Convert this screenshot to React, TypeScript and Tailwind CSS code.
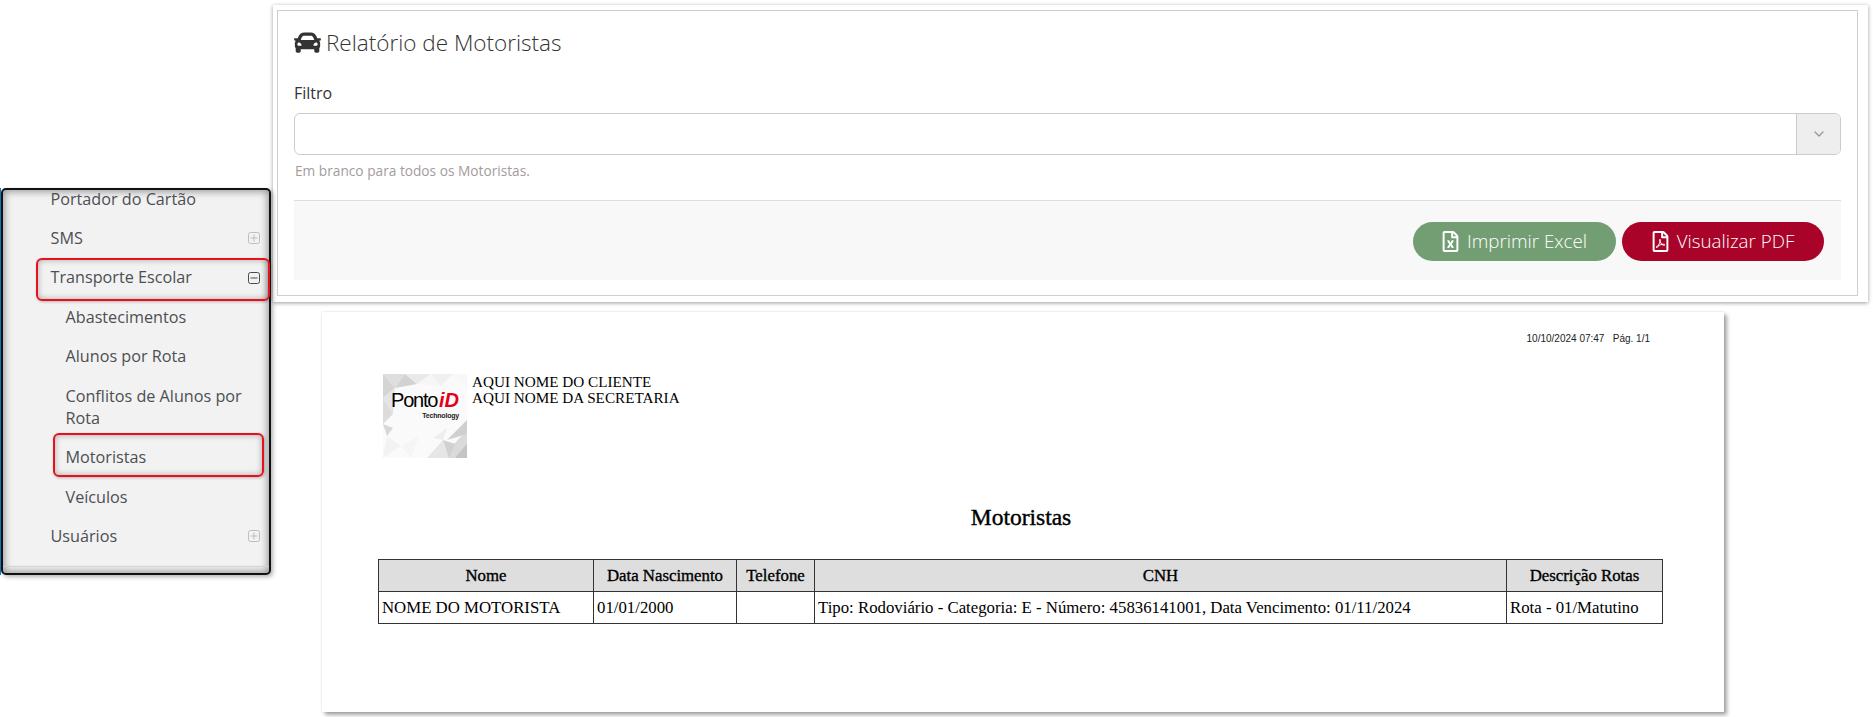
import { FaCar, FaRegFileExcel, FaRegFilePdf } from "react-icons/fa"
import { LuChevronDown } from "react-icons/lu"

type MenuItem = {
  label: string
  child?: boolean
  toggle?: "plus" | "minus"
}

const MENU: MenuItem[] = [
  { label: "Portador do Cartão" },
  { label: "SMS", toggle: "plus" },
  { label: "Transporte Escolar", toggle: "minus" },
  { label: "Abastecimentos", child: true },
  { label: "Alunos por Rota", child: true },
  { label: "Conflitos de Alunos por Rota", child: true },
  { label: "Motoristas", child: true },
  { label: "Veículos", child: true },
  { label: "Usuários", toggle: "plus" },
]

const TOGGLE_STYLE = { plus: "#bdbdbd", minus: "#4a4a4a" }

// Grey shards of the logo background.
const LOGO_SHARDS: [string, string][] = [
  ["0,0 22,0 12,14", "#dedede"],
  ["12,14 22,0 34,10", "#d2d2d2"],
  ["22,0 48,0 34,10", "#e9e9e9"],
  ["48,0 70,0 58,12", "#f0f0f0"],
  ["34,10 48,0 58,12", "#f6f6f6"],
  ["70,0 84,0 84,14", "#f7f7f7"],
  ["0,0 12,14 0,24", "#d4d4d4"],
  ["0,24 12,14 10,40", "#e4e4e4"],
  ["0,24 10,40 0,50", "#dcdcdc"],
  ["0,50 10,54 4,62", "#d8d8d8"],
  ["4,62 18,72 0,84", "#f2f2f2"],
  ["58,84 84,56 84,84", "#dadada"],
  ["64,66 84,46 84,60", "#cfcfcf"],
  ["44,84 60,66 66,84", "#e6e6e6"],
  ["60,66 72,70 66,84", "#d0d0d0"],
  ["50,64 64,54 60,66", "#eeeeee"],
  ["18,72 36,62 28,84", "#f5f5f5"],
  ["72,84 84,70 84,84", "#c4c4c4"],
]

const SideToggle = ({ kind }: { kind: "plus" | "minus" }) => (
  <svg width="12" height="12" viewBox="0 0 12 12" fill="none" stroke={TOGGLE_STYLE[kind]}>
    <rect x="0.5" y="0.5" width="11" height="11" rx="2" />
    <path d="M2.5 6h7" />
    {kind === "plus" && <path d="M6 2.5v7" />}
  </svg>
)

const Sidebar = () => (
  <div className="absolute left-0 top-[188px] h-[387px] w-[271px] border-l border-[#0a7fc0]">
    <div className="relative h-full overflow-hidden rounded-[5px] border-2 border-[#111] bg-[#f2f2f2] shadow-[inset_0_0_7px_2px_rgba(0,0,0,0.35),2px_2px_4px_rgba(0,0,0,0.3)]">
      <ul className="-mt-[11px] text-[16.2px] leading-[22.4px] text-[#4c4f53]">
        {MENU.map((item) => (
          <li
            key={item.label}
            className={`flex items-center justify-between py-[8.5px] pr-[9px] ${item.child ? "pl-[62.5px]" : "pl-[47.5px]"}`}
          >
            <span>{item.label}</span>
            {item.toggle && <SideToggle kind={item.toggle} />}
          </li>
        ))}
      </ul>
      <div className="absolute bottom-[6px] left-0 right-0 h-px bg-[#d4d4d4]" />
    </div>
    <div className="absolute left-[35px] top-[70px] h-[43px] w-[234px] rounded-[6px] border-2 border-[#e8101a] shadow-[inset_0_0_6px_rgba(0,0,0,0.3),1px_1px_3px_rgba(0,0,0,0.25)]" />
    <div className="absolute left-[52px] top-[245px] h-[44px] w-[211px] rounded-[6px] border-2 border-[#e8101a] shadow-[inset_0_0_6px_rgba(0,0,0,0.3),1px_1px_3px_rgba(0,0,0,0.25)]" />
  </div>
)

const FilterPanel = () => (
  <div className="absolute left-[273px] top-[5px] h-[297px] w-[1595px] bg-white pb-[6px] pl-1 pr-[10px] pt-[5px] shadow-[0_1px_4px_rgba(0,0,0,0.4)]">
    <div className="h-full border border-[#cfcfcf] px-4 pt-[15px]">
      <h2 className="flex h-[33px] items-center gap-[5px] text-[22.5px] font-light text-[#333]">
        <FaCar className="h-[27px] w-[27px]" />
        <span>Relatório de Motoristas</span>
      </h2>
      <label className="mt-[23px] block text-[16px] leading-[22px] text-[#333]">Filtro</label>
      <div className="mt-[9px] flex h-[42px] justify-end rounded-[6px] border border-[#ccc]">
        <div className="flex w-[44px] items-center justify-center rounded-r-[6px] border-l border-[#ccc] bg-[#eee] text-[#999]">
          <LuChevronDown className="h-4 w-4" />
        </div>
      </div>
      <p className="ml-px mt-[6px] text-[13.7px] leading-[20px] text-[#a39c9c]">Em branco para todos os Motoristas.</p>
      <div className="mt-[19px] flex h-[80px] items-start justify-end gap-[6px] border-t border-[#ddd] bg-[#f8f8f8] pr-[17px] pt-[21px]">
        <button className="flex h-[39px] w-[203px] items-center justify-center gap-[8px] rounded-full bg-[#739e73] text-[18.75px] font-light text-white">
          <FaRegFileExcel className="h-[21px] w-[17px]" />
          Imprimir Excel
        </button>
        <button className="flex h-[39px] w-[202px] items-center justify-center gap-[8px] rounded-full bg-[#a90329] text-[18.75px] font-light text-white">
          <FaRegFilePdf className="h-[21px] w-[17px]" />
          Visualizar PDF
        </button>
      </div>
    </div>
  </div>
)

const PontoLogo = () => (
  <svg width="84" height="84" viewBox="0 0 84 84" className="shrink-0">
    <rect width="84" height="84" fill="#fafafa" />
    {LOGO_SHARDS.map(([points, fill]) => (
      <polygon key={points} points={points} fill={fill} />
    ))}
    <text x="8" y="33" fontFamily="Liberation Sans" fontSize="20" letterSpacing="-1.2" fill="#000">
      Ponto
    </text>
    <text x="56" y="33" fontFamily="Liberation Sans" fontSize="20" fontWeight="700" fontStyle="italic" fill="#e2001a">
      iD
    </text>
    <text x="76" y="44" textAnchor="end" fontFamily="Liberation Sans" fontSize="7" fontWeight="700" letterSpacing="-0.2" fill="#222">
      Technology
    </text>
  </svg>
)

const COLUMNS = [
  { title: "Nome", width: "w-[215px]", value: "NOME DO MOTORISTA" },
  { title: "Data Nascimento", width: "w-[143px]", value: "01/01/2000" },
  { title: "Telefone", width: "w-[78px]", value: "" },
  {
    title: "CNH",
    width: "w-[692px]",
    value: "Tipo: Rodoviário - Categoria: E - Número: 45836141001, Data Vencimento: 01/11/2024",
  },
  { title: "Descrição Rotas", width: "w-[156px]", value: "Rota - 01/Matutino" },
]

const ReportPage = () => (
  <div className="absolute left-[322px] top-[312px] h-[400px] w-[1402px] bg-white pl-[56px] pr-[60px] font-['Liberation_Serif',serif] text-black shadow-[0_0_2px_rgba(0,0,0,0.15),3px_3px_4px_rgba(0,0,0,0.35)]">
    <div className="pr-[14px] pt-[21px] text-right font-['Liberation_Sans',sans-serif] text-[10px] leading-[12px] text-[#222]">
      10/10/2024 07:47 &nbsp; Pág. 1/1
    </div>
    <div className="ml-[5px] mt-[29px] flex gap-[5px]">
      <PontoLogo />
      <div className="text-[15.2px] leading-[16px]">
        <div>AQUI NOME DO CLIENTE</div>
        <div>AQUI NOME DA SECRETARIA</div>
      </div>
    </div>
    <h1 className="mt-[44px] text-center text-[23.5px] leading-[30px] [-webkit-text-stroke:0.4px_black]">Motoristas</h1>
    <table className="mt-[27px] w-[1284px] table-fixed border-collapse text-[16.8px]">
      <thead>
        <tr className="h-[32px] bg-[#dedede]">
          {COLUMNS.map((col) => (
            <th key={col.title} className={`border border-[#333] font-normal [-webkit-text-stroke:0.35px_black] ${col.width}`}>
              {col.title}
            </th>
          ))}
        </tr>
      </thead>
      <tbody>
        <tr className="h-[32px]">
          {COLUMNS.map((col) => (
            <td key={col.title} className="border border-[#333] px-[3px]">
              {col.value}
            </td>
          ))}
        </tr>
      </tbody>
    </table>
  </div>
)

export default function App() {
  return (
    <div className="relative h-[717px] w-[1873px] overflow-hidden bg-white font-['Open_Sans',sans-serif]">
      <FilterPanel />
      <Sidebar />
      <ReportPage />
    </div>
  )
}
